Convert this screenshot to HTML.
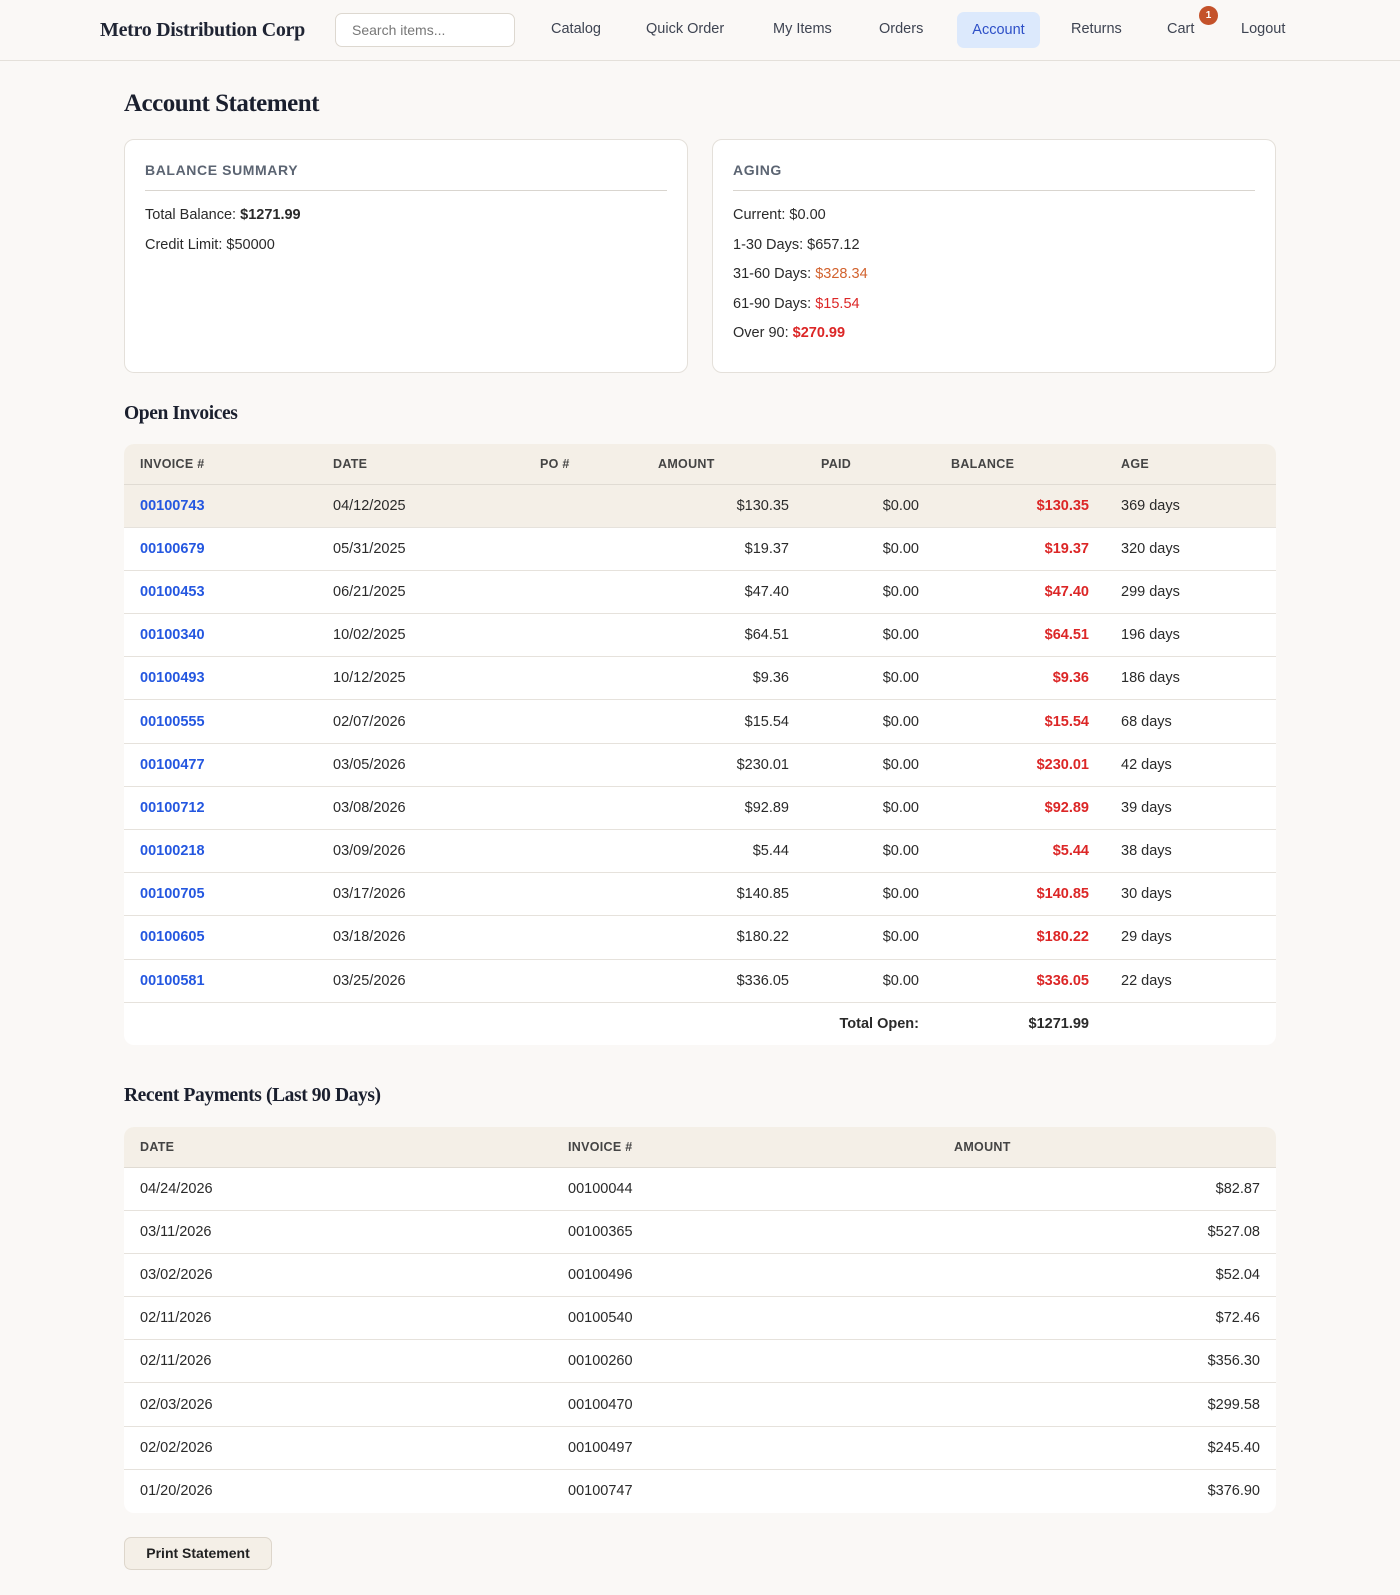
<!DOCTYPE html>
<html><head><style>
*{box-sizing:border-box;margin:0;padding:0}
body{width:1400px;height:1595px;background:#faf8f6;font-family:"Liberation Sans",sans-serif;color:#2a2a2a;font-size:14.5px;position:relative;overflow:hidden}
.nav{height:61px;border-bottom:1px solid #e4e0da;position:relative}
.brand{position:absolute;left:100px;top:19px;font-family:"Liberation Serif",serif;font-weight:bold;font-size:20px;color:#1f2433;letter-spacing:-0.3px}
.search{position:absolute;left:335px;top:13px;width:180px;height:34px;border:1px solid #ddd8d0;border-radius:7px;background:#fff;font-size:14px;color:#777;padding:8px 16px}
.ni{position:absolute;top:21px;font-size:14.5px;color:#3e4452}
.acc{position:absolute;left:957px;top:12px;width:83px;height:36px;background:#dce9fc;border-radius:7px;color:#2d4fc7;text-align:center;line-height:36px;font-size:14.5px}
.badge{position:absolute;left:1199px;top:6px;width:19px;height:19px;border-radius:50%;background:#c4522a;color:#fff;font-size:10px;font-weight:bold;text-align:center;line-height:19px}
h1{position:absolute;left:124px;top:90px;font-family:"Liberation Serif",serif;font-size:25px;font-weight:bold;color:#1a1f2e;letter-spacing:-0.5px}
h2{position:absolute;left:124px;font-family:"Liberation Serif",serif;font-size:19.5px;font-weight:bold;color:#1a1f2e;letter-spacing:-0.4px}
.card{position:absolute;top:139px;width:564px;height:234px;background:#fff;border:1px solid #e4e0da;border-radius:10px;padding:22px 20px}
.card .t{font-size:14px;font-weight:bold;color:#5b6472;letter-spacing:0.6px;padding-bottom:12px;border-bottom:1px solid #d9d5cf;margin-bottom:10px}
.card p{font-size:14.5px;line-height:29.5px;color:#2a2a2a}
.o{color:#d2622e}.r{color:#dc2626}
table{position:absolute;left:124px;width:1152px;border-collapse:collapse;background:#fff;border-radius:10px;overflow:hidden}
th{background:#f4efe7;font-size:12.5px;font-weight:bold;color:#444;text-align:left;height:40px;padding:0 16px;letter-spacing:0.3px;border-bottom:1px solid #e0dbd3}
td{height:43.2px;padding:0 16px;font-size:14.5px;border-bottom:1px solid #e6e2dc}
td.n{text-align:right}
a{color:#2457e0;font-weight:bold;text-decoration:none}
td.b{color:#dc2626;font-weight:bold;text-align:right}
tr.h td{background:#f4efe7}
tr.tot td{border-bottom:none;font-weight:bold}
.btn{position:absolute;left:124px;top:1537px;width:148px;height:33px;border:1px solid #ddd6cb;border-radius:7px;background:#f4efe7;font-weight:bold;font-size:14px;text-align:center;line-height:31px;color:#222}
</style></head><body>
<div class="nav">
<div class="brand">Metro Distribution Corp</div>
<div class="search">Search items...</div>
<div class="ni" style="left:551px">Catalog</div>
<div class="ni" style="left:646px">Quick Order</div>
<div class="ni" style="left:773px">My Items</div>
<div class="ni" style="left:879px">Orders</div>
<div class="acc">Account</div>
<div class="ni" style="left:1071px">Returns</div>
<div class="ni" style="left:1167px">Cart</div>
<div class="badge">1</div>
<div class="ni" style="left:1241px">Logout</div>
</div>
<h1>Account Statement</h1>
<div class="card" style="left:124px"><div class="t">BALANCE SUMMARY</div>
<p>Total Balance: <b>$1271.99</b></p><p>Credit Limit: $50000</p></div>
<div class="card" style="left:712px"><div class="t">AGING</div>
<p>Current: $0.00</p><p>1-30 Days: $657.12</p><p>31-60 Days: <span class="o">$328.34</span></p><p>61-90 Days: <span class="r">$15.54</span></p><p>Over 90: <b class="r">$270.99</b></p></div>
<h2 style="top:403px">Open Invoices</h2>
<table style="top:444px">
<tr><th style="width:193px">INVOICE #</th><th style="width:207px">DATE</th><th style="width:118px">PO #</th><th style="width:163px">AMOUNT</th><th style="width:130px">PAID</th><th style="width:170px">BALANCE</th><th>AGE</th></tr>
<tr class="h"><td><a>00100743</a></td><td>04/12/2025</td><td></td><td class="n">$130.35</td><td class="n">$0.00</td><td class="b">$130.35</td><td>369 days</td></tr>
<tr><td><a>00100679</a></td><td>05/31/2025</td><td></td><td class="n">$19.37</td><td class="n">$0.00</td><td class="b">$19.37</td><td>320 days</td></tr>
<tr><td><a>00100453</a></td><td>06/21/2025</td><td></td><td class="n">$47.40</td><td class="n">$0.00</td><td class="b">$47.40</td><td>299 days</td></tr>
<tr><td><a>00100340</a></td><td>10/02/2025</td><td></td><td class="n">$64.51</td><td class="n">$0.00</td><td class="b">$64.51</td><td>196 days</td></tr>
<tr><td><a>00100493</a></td><td>10/12/2025</td><td></td><td class="n">$9.36</td><td class="n">$0.00</td><td class="b">$9.36</td><td>186 days</td></tr>
<tr><td><a>00100555</a></td><td>02/07/2026</td><td></td><td class="n">$15.54</td><td class="n">$0.00</td><td class="b">$15.54</td><td>68 days</td></tr>
<tr><td><a>00100477</a></td><td>03/05/2026</td><td></td><td class="n">$230.01</td><td class="n">$0.00</td><td class="b">$230.01</td><td>42 days</td></tr>
<tr><td><a>00100712</a></td><td>03/08/2026</td><td></td><td class="n">$92.89</td><td class="n">$0.00</td><td class="b">$92.89</td><td>39 days</td></tr>
<tr><td><a>00100218</a></td><td>03/09/2026</td><td></td><td class="n">$5.44</td><td class="n">$0.00</td><td class="b">$5.44</td><td>38 days</td></tr>
<tr><td><a>00100705</a></td><td>03/17/2026</td><td></td><td class="n">$140.85</td><td class="n">$0.00</td><td class="b">$140.85</td><td>30 days</td></tr>
<tr><td><a>00100605</a></td><td>03/18/2026</td><td></td><td class="n">$180.22</td><td class="n">$0.00</td><td class="b">$180.22</td><td>29 days</td></tr>
<tr><td><a>00100581</a></td><td>03/25/2026</td><td></td><td class="n">$336.05</td><td class="n">$0.00</td><td class="b">$336.05</td><td>22 days</td></tr>
<tr class="tot"><td></td><td></td><td></td><td></td><td class="n">Total Open:</td><td class="n">$1271.99</td><td></td></tr>
</table>
<h2 style="top:1085px">Recent Payments (Last 90 Days)</h2>
<table style="top:1127px">
<tr><th style="width:428px">DATE</th><th style="width:386px">INVOICE #</th><th>AMOUNT</th></tr>
<tr><td>04/24/2026</td><td>00100044</td><td class="n">$82.87</td></tr>
<tr><td>03/11/2026</td><td>00100365</td><td class="n">$527.08</td></tr>
<tr><td>03/02/2026</td><td>00100496</td><td class="n">$52.04</td></tr>
<tr><td>02/11/2026</td><td>00100540</td><td class="n">$72.46</td></tr>
<tr><td>02/11/2026</td><td>00100260</td><td class="n">$356.30</td></tr>
<tr><td>02/03/2026</td><td>00100470</td><td class="n">$299.58</td></tr>
<tr><td>02/02/2026</td><td>00100497</td><td class="n">$245.40</td></tr>
<tr class="tot"><td style="font-weight:normal">01/20/2026</td><td style="font-weight:normal">00100747</td><td class="n" style="font-weight:normal">$376.90</td></tr>
</table>
<div class="btn">Print Statement</div>
</body></html>
